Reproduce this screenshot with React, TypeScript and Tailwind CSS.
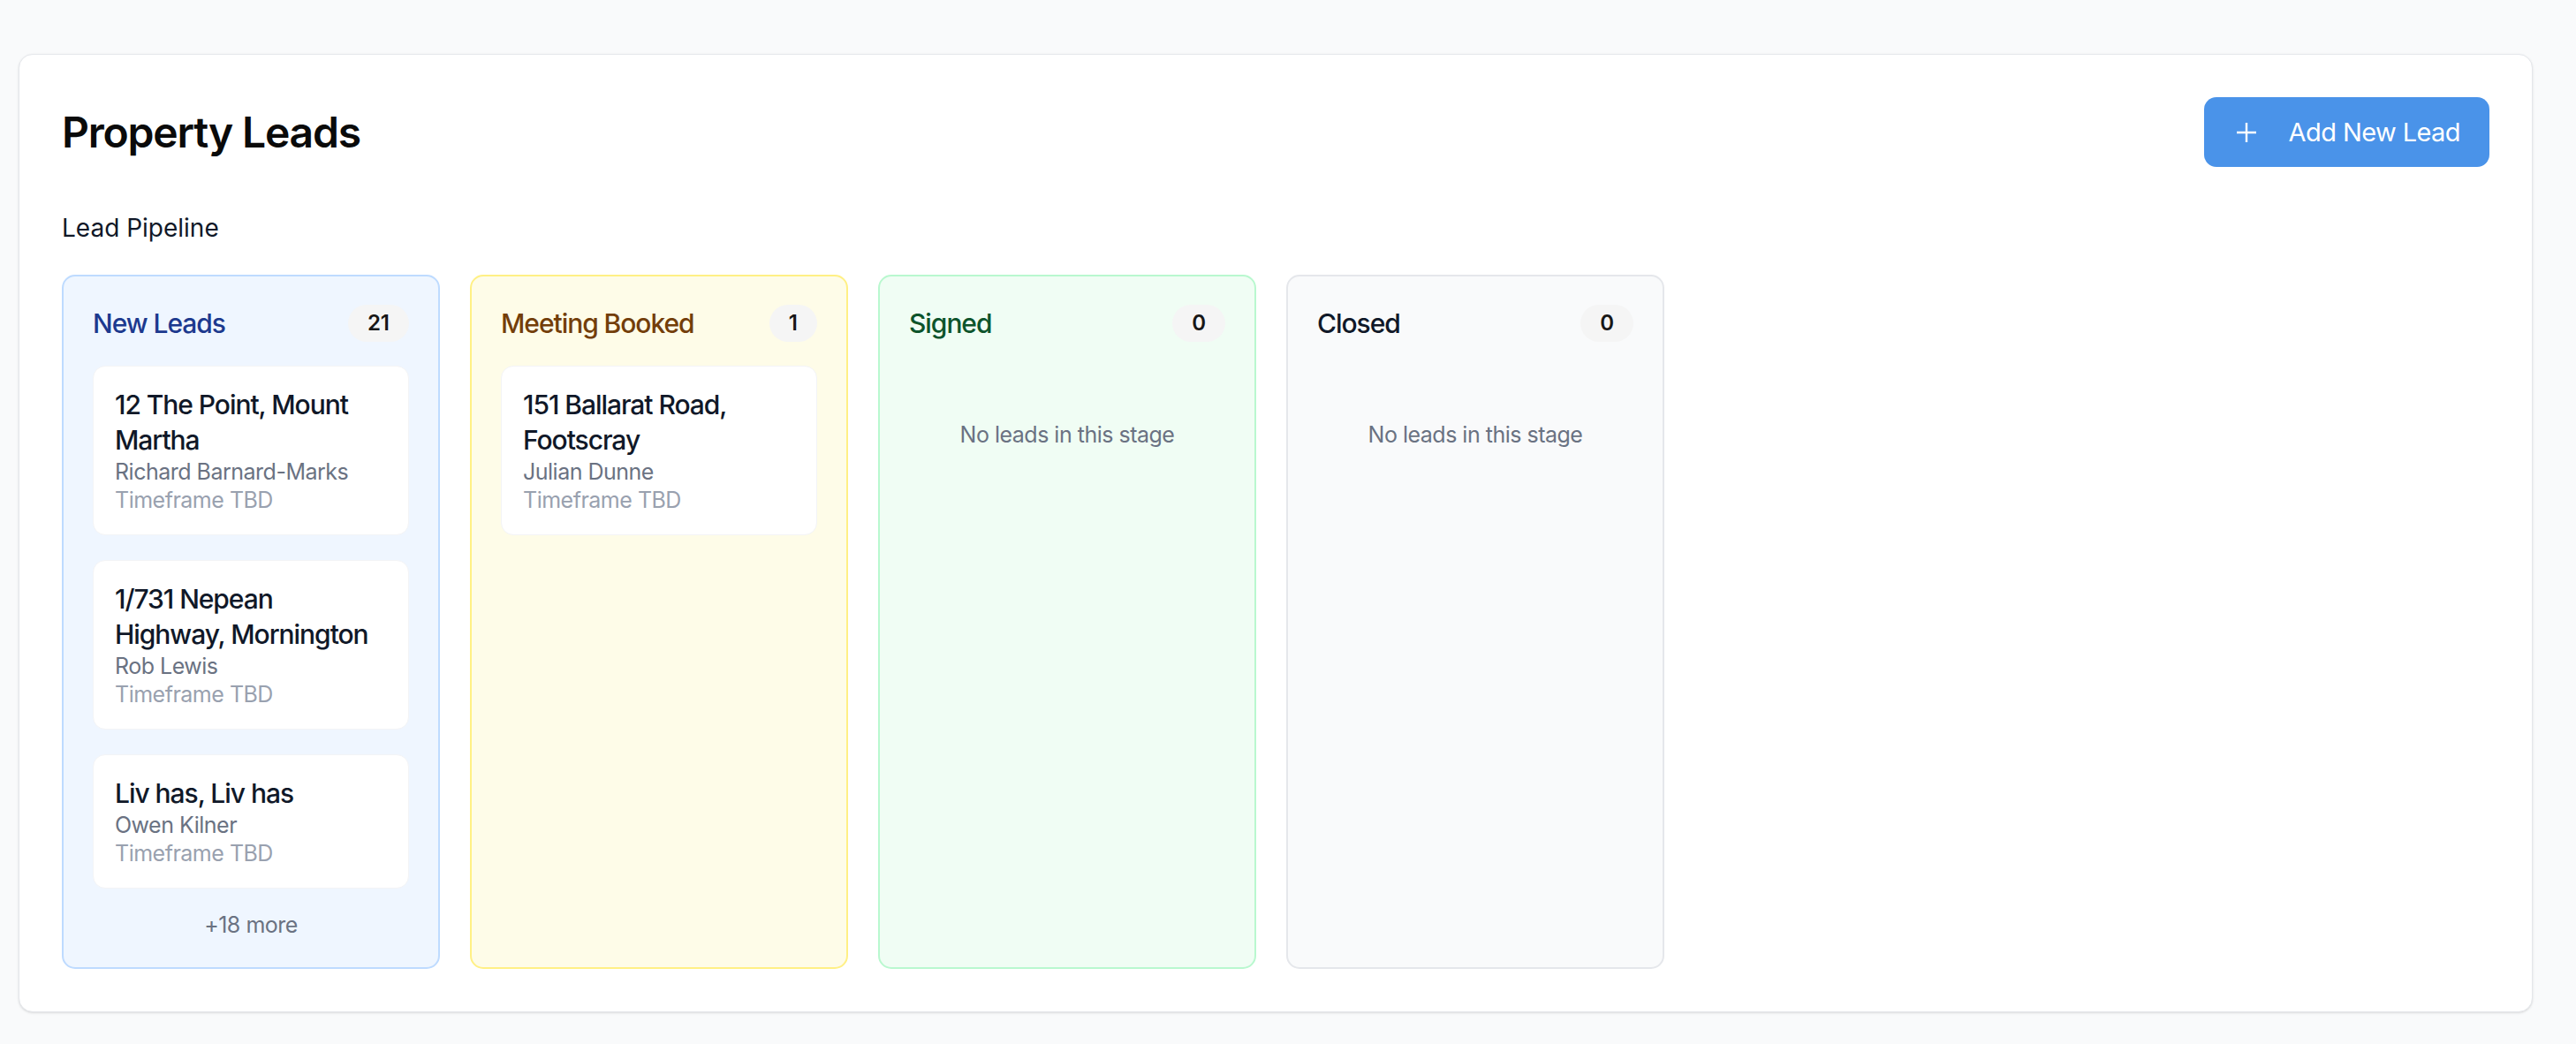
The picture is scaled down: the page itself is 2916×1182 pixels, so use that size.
type Lead = {
  address: string;
  name: string;
  timeframe: string;
};

type Stage = {
  title: string;
  count: number;
  leads: Lead[];
  more?: number;
  box: string;
  heading: string;
};

const stages: Stage[] = [
  {
    title: 'New Leads',
    count: 21,
    more: 18,
    box: 'bg-blue-50 border-blue-200',
    heading: 'text-blue-900',
    leads: [
      { address: '12 The Point, Mount Martha', name: 'Richard Barnard-Marks', timeframe: 'Timeframe TBD' },
      { address: '1/731 Nepean Highway, Mornington', name: 'Rob Lewis', timeframe: 'Timeframe TBD' },
      { address: 'Liv has, Liv has', name: 'Owen Kilner', timeframe: 'Timeframe TBD' },
    ],
  },
  {
    title: 'Meeting Booked',
    count: 1,
    box: 'bg-yellow-50 border-yellow-200',
    heading: 'text-yellow-900',
    leads: [{ address: '151 Ballarat Road, Footscray', name: 'Julian Dunne', timeframe: 'Timeframe TBD' }],
  },
  {
    title: 'Signed',
    count: 0,
    box: 'bg-green-50 border-green-200',
    heading: 'text-green-900',
    leads: [],
  },
  {
    title: 'Closed',
    count: 0,
    box: 'bg-gray-50 border-gray-200',
    heading: 'text-gray-900',
    leads: [],
  },
];

function LeadCard({ lead }: { lead: Lead }) {
  return (
    <div className="bg-white border border-gray-100 rounded-[14px] px-[24px] py-[23px]">
      <p className="text-[30px] leading-[40px] font-medium tracking-[-0.035em] text-gray-900">{lead.address}</p>
      <p className="text-[25px] leading-[32px] tracking-[-0.02em] text-gray-500">{lead.name}</p>
      <p className="text-[25px] leading-[32px] tracking-[-0.02em] text-gray-400">{lead.timeframe}</p>
    </div>
  );
}

function StageColumn({ stage }: { stage: Stage }) {
  return (
    <div className={`border-2 rounded-[15px] px-[33px] py-[32px] ${stage.box}`}>
      {/* Column header */}
      <div className="flex items-center justify-between mb-[27px]">
        <h3 className={`text-[30px] leading-[40px] font-medium tracking-[-0.035em] ${stage.heading}`}>{stage.title}</h3>
        <span className="h-[42px] px-[22px] flex items-center rounded-full bg-neutral-100 text-[24px] font-semibold text-neutral-900">
          {stage.count}
        </span>
      </div>

      {stage.leads.length === 0 ? (
        <p className="text-center text-[25px] leading-[32px] tracking-[-0.02em] text-gray-500 pt-[62px]">
          No leads in this stage
        </p>
      ) : (
        <div className="flex flex-col gap-[28px]">
          {stage.leads.map((lead) => (
            <LeadCard key={lead.address} lead={lead} />
          ))}
        </div>
      )}

      {stage.more && (
        <p className="mt-[25px] text-center text-[25px] leading-[32px] tracking-[-0.02em] text-gray-500">
          +{stage.more} more
        </p>
      )}
    </div>
  );
}

export default function App() {
  return (
    <div className="min-h-screen bg-gray-50 pl-[21px] pr-[49px] pt-[61px] pb-[35px] font-['Inter',sans-serif]">
      <div className="bg-white border border-gray-200 rounded-[16px] shadow-sm px-[48px] pt-[48px] pb-[48px]">
        {/* Header */}
        <div className="flex items-center justify-between">
          <h1 className="text-[48px] leading-[60px] font-semibold tracking-tight text-neutral-950">Property Leads</h1>
          <button className="h-[79px] flex items-center gap-[37px] pl-[37px] pr-[33px] rounded-[14px] bg-[#4a93e9] text-white text-[29px] tracking-[-0.02em]">
            <svg width="22" height="22" viewBox="0 0 22 22" fill="none" stroke="currentColor" strokeWidth="2.4">
              <path d="M11 0v22M0 11h22" />
            </svg>
            Add New Lead
          </button>
        </div>

        <h2 className="mt-[49px] text-[28px] leading-[40px] text-gray-900">Lead Pipeline</h2>

        {/* Pipeline columns */}
        <div className="mt-[33px] grid grid-cols-[repeat(4,428px)] gap-[34px]">
          {stages.map((stage) => (
            <StageColumn key={stage.title} stage={stage} />
          ))}
        </div>
      </div>
    </div>
  );
}
